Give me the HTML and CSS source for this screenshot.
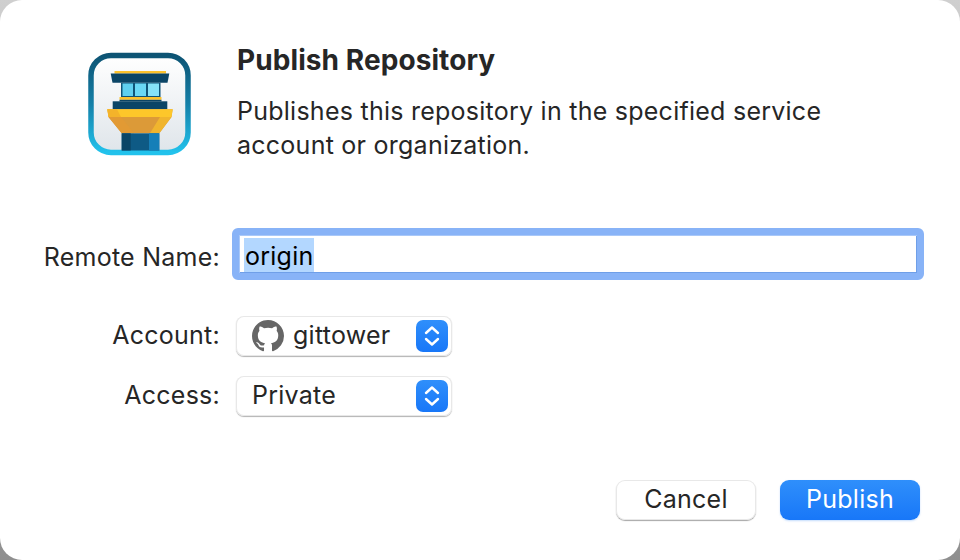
FILE: index.html
```html
<!DOCTYPE html>
<html lang="en">

<head>
    <meta charset="UTF-8">
    <title>Publish Repository</title>
    <link rel="stylesheet" href="styles.css">
</head>

<body>
    <main class="dialog">
        <!-- App icon and description -->
        <header class="head">
            <svg class="app-icon" width="104" height="104" viewBox="0 0 104 104">
                <defs>
                    <linearGradient id="ring" x1="0" y1="0" x2="0" y2="1">
                        <stop offset="0" stop-color="#0d5474"/>
                        <stop offset="0.5" stop-color="#1480a8"/>
                        <stop offset="1" stop-color="#22c2ec"/>
                    </linearGradient>
                    <linearGradient id="plate" x1="0" y1="0" x2="0" y2="1">
                        <stop offset="0" stop-color="#ffffff"/>
                        <stop offset="1" stop-color="#dfe5ea"/>
                    </linearGradient>
                </defs>
                <rect x="3" y="3.4" width="97" height="97" rx="20" fill="url(#plate)" stroke="url(#ring)" stroke-width="5.5"/>
                <rect x="26.5" y="19" width="51.5" height="2.6" fill="#fdc22c"/>
                <path d="M22.7 21.5H81.3L79.5 30.7H24.5Z" fill="#0b4566"/>
                <rect x="33" y="30.7" width="39.5" height="14.5" fill="#0f5478"/>
                <rect x="34.5" y="31.5" width="10.5" height="12.5" fill="#5fd0f0"/>
                <rect x="47" y="31.5" width="11" height="12.5" fill="#6ad8f5"/>
                <rect x="60" y="31.5" width="11" height="12.5" fill="#86e2f8"/>
                <rect x="31.5" y="45" width="42" height="2.8" fill="#fdc22c"/>
                <rect x="31.5" y="47.8" width="42" height="1.6" fill="#0b4566"/>
                <rect x="24.7" y="49.3" width="54.6" height="8" fill="#0b4566"/>
                <path d="M19.3 57.3H84.7L83.5 65L71.3 81.3H33.7L20.5 65Z" fill="#dc9a38"/>
                <path d="M19.3 57.3H84.7L83.5 65H20.5Z" fill="#fdc72a"/>
                <path d="M19.3 57.3H29L33 65H20.5Z" fill="#f4b32a"/>
                <path d="M33.7 81.3L20.5 65H33L46 81.3Z" fill="#e29a34"/>
                <path d="M71.3 81.3L83.5 65H72L62 81.3Z" fill="#f0b52e"/>
                <rect x="33.7" y="81.3" width="37.6" height="17.2" fill="#0e5a85"/>
                <rect x="33.7" y="81.3" width="9" height="17.2" fill="#0b4566"/>
                <rect x="61" y="81.3" width="10.3" height="17.2" fill="#167fb8"/>
            </svg>
            <div class="intro">
                <h1>Publish Repository</h1>
                <p>Publishes this repository in the specified service account or organization.</p>
            </div>
        </header>

        <!-- Form fields -->
        <form class="fields">
            <label class="field-label remote-label">Remote Name:</label>
            <div class="text-input"><span class="selected">origin</span></div>

            <label class="field-label account-label">Account:</label>
            <div class="select account-select">
                <svg class="gh-mark" width="32" height="32" viewBox="0 0 16 16">
                    <path fill="#666" d="M8 0C3.58 0 0 3.58 0 8c0 3.54 2.29 6.53 5.47 7.59.4.07.55-.17.55-.38 0-.19-.01-.82-.01-1.49-2.01.37-2.53-.49-2.69-.94-.09-.23-.48-.94-.82-1.13-.28-.15-.68-.52-.01-.53.63-.01 1.08.58 1.23.82.72 1.21 1.87.87 2.33.66.07-.52.28-.87.51-1.07-1.78-.2-3.64-.89-3.64-3.95 0-.87.31-1.59.82-2.15-.08-.2-.36-1.02.08-2.12 0 0 .67-.21 2.2.82.64-.18 1.32-.27 2-.27s1.36.09 2 .27c1.53-1.04 2.2-.82 2.2-.82.44 1.1.16 1.92.08 2.12.51.56.82 1.27.82 2.15 0 3.07-1.87 3.75-3.65 3.95.29.25.54.73.54 1.48 0 1.07-.01 1.93-.01 2.2 0 .21.15.46.55.38A8.01 8.01 0 0 0 16 8c0-4.42-3.58-8-8-8z"/>
                </svg>
                <span class="select-text">gittower</span>
                <span class="stepper">
                    <svg width="32" height="32" viewBox="0 0 32 32"><path d="M10 13L16 7.5L22 13M10 19L16 24.5L22 19" fill="none" stroke="#fff" stroke-width="2.4" stroke-linecap="round" stroke-linejoin="round"/></svg>
                </span>
            </div>

            <label class="field-label access-label">Access:</label>
            <div class="select access-select">
                <span class="select-text">Private</span>
                <span class="stepper">
                    <svg width="32" height="32" viewBox="0 0 32 32"><path d="M10 13L16 7.5L22 13M10 19L16 24.5L22 19" fill="none" stroke="#fff" stroke-width="2.4" stroke-linecap="round" stroke-linejoin="round"/></svg>
                </span>
            </div>
        </form>

        <footer class="actions">
            <button class="btn cancel" type="button">Cancel</button>
            <button class="btn publish" type="button">Publish</button>
        </footer>
    </main>
</body>

</html>
```

FILE: styles.css
```css
html, body {
    height: 100%;
}

body {
    margin: 0;
    font-family: Inter, 'Noto Sans', sans-serif;
    color: #262626;
    background: linear-gradient(#cfcfcf, #8f8f8f);
    overflow: hidden;
    letter-spacing: 0.25px;
}

.dialog {
    box-sizing: border-box;
    height: 560px;
    background-color: #ffffff;
    border-radius: 22px;
    display: flex;
    flex-direction: column;
}

/* Top section */
.head {
    display: flex;
    padding: 41px 0 0 88px;
}

.app-icon {
    flex: none;
    margin-top: 11px;
}

.intro {
    margin-left: 45px;
    width: 600px;
}

h1 {
    margin: 0;
    font-size: 28px;
    line-height: 38px;
    font-weight: 700;
    letter-spacing: 0.08px;
}

.intro p {
    margin: 15px 0 0;
    font-size: 25px;
    line-height: 34px;
    font-weight: 400;
}

/* Form */
.fields {
    display: grid;
    grid-template-columns: 219px 692px;
    column-gap: 13px;
    align-items: center;
    margin-top: 66px;
}

.field-label {
    margin-right: -1px;
    padding-bottom: 2px;
    text-align: right;
    font-size: 25px;
}

.remote-label {
    padding: 6px 0 0;
}

.text-input {
    box-sizing: border-box;
    height: 52px;
    padding: 3px 0 0 5px;
    background-color: #ffffff;
    border: 7px solid #88b3f7;
    border-radius: 6px;
    font-size: 25px;
    line-height: 36px;
    color: #000000;
    display: flex;
    box-shadow: inset 1px 1px 0 #a9c8f8, inset -1px -1px 0 #6f9fe8;
}

.selected {
    background-color: #b3d7ff;
    height: 34px;
    padding-left: 1px;
}

.select {
    box-sizing: border-box;
    width: 216px;
    height: 40px;
    margin-left: 4px;
    padding: 0 4px 0 16px;
    display: flex;
    align-items: center;
    background-color: #ffffff;
    border-radius: 8px;
    box-shadow: inset 0 0 0 1px #e8e8e8, 0 1px 1px rgba(0, 0, 0, 0.3);
    font-size: 25px;
}

.account-label, .account-select {
    margin-top: 36px;
}

.access-label, .access-select {
    margin-top: 20px;
}

.gh-mark {
    flex: none;
    margin-right: 9px;
}

.select-text {
    flex: 1;
    padding-bottom: 2px;
}

.stepper {
    flex: none;
    width: 32px;
    height: 32px;
    border-radius: 7px;
    background: linear-gradient(#2f8ffb, #1877f8);
}

.stepper svg {
    display: block;
}

/* Buttons */
.actions {
    margin-top: auto;
    padding: 0 40px 40px 0;
    display: flex;
    justify-content: flex-end;
    gap: 24px;
}

.btn {
    width: 140px;
    height: 40px;
    padding: 0 0 2px;
    border: none;
    border-radius: 9px;
    font-family: inherit;
    font-size: 25px;
    letter-spacing: inherit;
}

.btn.cancel {
    background-color: #ffffff;
    color: #262626;
    box-shadow: inset 0 0 0 1px #e8e8e8, 0 1px 1px rgba(0, 0, 0, 0.35);
}

.btn.publish {
    background: linear-gradient(#2f8ffb, #1877f8);
    color: #ffffff;
    box-shadow: 0 1px 2px rgba(24, 119, 248, 0.25);
}
```
